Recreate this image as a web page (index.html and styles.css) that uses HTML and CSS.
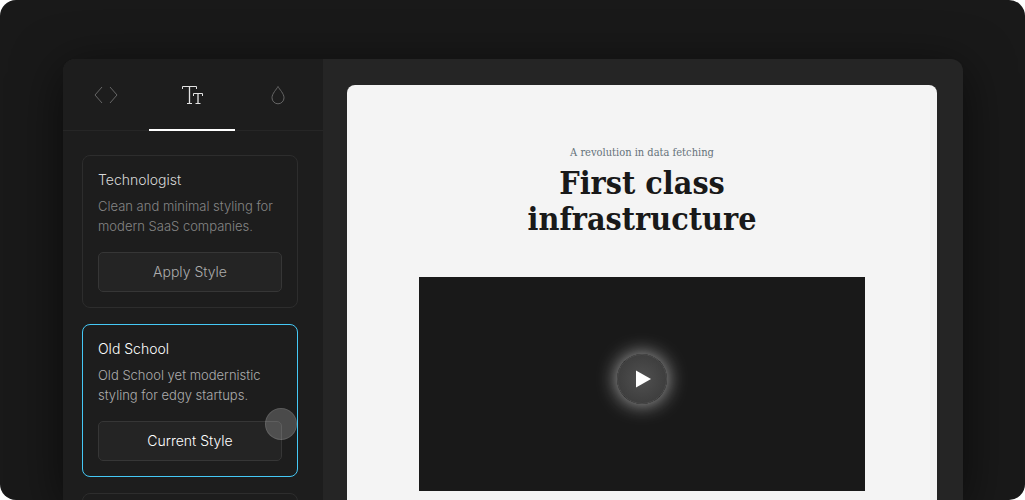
FILE: index.html
```html
<!DOCTYPE html>
<html lang="en">
<head>
<meta charset="utf-8">
<meta name="viewport" content="width=device-width, initial-scale=1">
<title>Style editor</title>
<link rel="stylesheet" href="styles.css">
</head>
<body>
<main class="stage">
  <div class="window">
    <aside class="sidebar">
      <div class="tabs" role="tablist">
        <button class="tab" type="button" role="tab" aria-selected="false" aria-label="Code">
          <svg width="24" height="20" viewBox="0 0 24 20"><path d="M8 2 1 10 8 18M16 2l7 8-7 8"/></svg>
        </button>
        <button class="tab tab-active" type="button" role="tab" aria-selected="true" aria-label="Typography">
          <svg width="22" height="20" viewBox="0 0 22 20"><path d="M1.500 4V1.500H15.500V4M6 18.500H11M12.500 11V8.500H21.500V11M14.500 18.500H19.500"/><path d="M8.500 1.500V18.500M17 8.500V18.500" stroke-width="1.300"/></svg>
        </button>
        <button class="tab" type="button" role="tab" aria-selected="false" aria-label="Color">
          <svg width="14" height="20" viewBox="0 0 14 20"><path d="M7 1.500C5.500 4.500 1 8.500 1 12.800A6 6 0 0 0 13 12.800C13 8.500 8.500 4.500 7 1.500Z"/></svg>
        </button>
      </div>
      <div class="styles">
        <section class="card">
          <h2 class="card-title">Technologist</h2>
          <p class="card-text">Clean and minimal styling for modern SaaS companies.</p>
          <button class="card-button" type="button">Apply Style</button>
        </section>
        <section class="card card-current">
          <h2 class="card-title">Old School</h2>
          <p class="card-text">Old School yet modernistic styling for edgy startups.</p>
          <button class="card-button" type="button">Current Style</button>
          <span class="pointer" aria-hidden="true"></span>
        </section>
        <section class="card card-next"></section>
      </div>
    </aside>
    <div class="canvas">
      <article class="page">
        <p class="eyebrow">A revolution in data fetching</p>
        <h1 class="headline">First class<br>infrastructure</h1>
        <div class="video">
          <button class="play" type="button" aria-label="Play video">
            <svg width="18" height="18" viewBox="0 0 18 18"><path d="M3 .5 18 9 3 17.500Z"/></svg>
          </button>
        </div>
      </article>
    </div>
  </div>
</main>
</body>
</html>
```

FILE: styles.css
```css
* {
  box-sizing: border-box;
}

body {
  margin: 0;
  background: #fff;
  font-family: Inter, "Liberation Sans", sans-serif;
}

h1, h2, p {
  margin: 0;
}

button {
  padding: 0;
  border: 0;
  background: none;
  font: inherit;
  cursor: pointer;
}

.stage {
  display: flex;
  height: 100vh;
  padding: 59px 62px 0 63px;
  overflow: hidden;
  border-radius: 16px;
  background: #191919;
}

.window {
  display: flex;
  flex: 1;
  border-radius: 12px 12px 0 0;
  background: #252525;
  box-shadow: 0 10px 50px rgba(0, 0, 0, 0.6);
}

.sidebar {
  flex: 0 0 260px;
  border-radius: 12px 0 0 0;
  background: #1d1d1d;
}

.tabs {
  display: grid;
  grid-template-columns: 1fr 1fr 1fr;
  height: 72px;
  padding-right: 2px;
  box-shadow: inset 0 -1px #262626;
}

.tab {
  display: flex;
  align-items: center;
  justify-content: center;
  border-top: 2px solid transparent;
  border-bottom: 2px solid transparent;
  color: #666;
}

.tab-active {
  border-bottom-color: #fff;
  color: #e2e2e2;
}

.tab svg {
  fill: none;
  stroke: currentColor;
  stroke-width: 1;
}

.styles {
  display: flex;
  flex-direction: column;
  gap: 16px;
  padding: 24px 25px 0 19px;
}

.card {
  display: flex;
  flex-direction: column;
  padding: 14px 15px 15px;
  border: 1px solid #2d2d2d;
  border-radius: 8px;
  font-size: 14px;
  font-weight: 300;
  line-height: 20px;
}

.card-title {
  margin-bottom: 6px;
  color: #d9d9d9;
  font-size: 14px;
  font-weight: 300;
}

.card-text {
  margin-bottom: 16px;
  color: #858585;
  font-size: 13px;
}

.card-button {
  height: 40px;
  border: 1px solid #363636;
  border-radius: 5px;
  background: #242424;
  color: #acacac;
}

.card-current {
  position: relative;
  border-color: #45c8f5;
}

.card-current .card-title,
.card-current .card-button {
  color: #fff;
}

.card-current .card-text {
  color: #adadad;
}

.card-next {
  min-height: 153px;
}

.pointer {
  position: absolute;
  top: 83px;
  right: 0;
  width: 32px;
  height: 32px;
  border: 1px solid rgba(255, 255, 255, 0.1);
  border-radius: 50%;
  background: rgba(255, 255, 255, 0.2);
}

.canvas {
  display: flex;
  flex: 1;
  padding: 26px 26px 0 24px;
}

.page {
  flex: 1;
  padding: 60px 72px 0;
  border-radius: 8px 8px 0 0;
  background: #f4f4f4;
  text-align: center;
}

.eyebrow {
  margin-bottom: 4px;
  color: #65727a;
  font-family: "DejaVu Serif Condensed", "DejaVu Serif", serif;
  font-size: 11px;
  line-height: 16px;
}

.headline {
  margin-bottom: 40px;
  color: #191919;
  font-family: "DejaVu Serif Condensed", "DejaVu Serif", serif;
  font-size: 32px;
  font-weight: 700;
  line-height: 36px;
}

.video {
  display: flex;
  align-items: center;
  justify-content: center;
  aspect-ratio: 446 / 214;
  padding-bottom: 10px;
  background: #191919;
}

.play {
  display: flex;
  align-items: center;
  justify-content: center;
  width: 50px;
  height: 50px;
  border: 1px solid #4c4c4c;
  border-radius: 50%;
  background: radial-gradient(circle, #505050, #373737);
  box-shadow: 0 0 20px rgba(255, 255, 255, 0.7);
}

.play svg {
  fill: #fff;
}
```
